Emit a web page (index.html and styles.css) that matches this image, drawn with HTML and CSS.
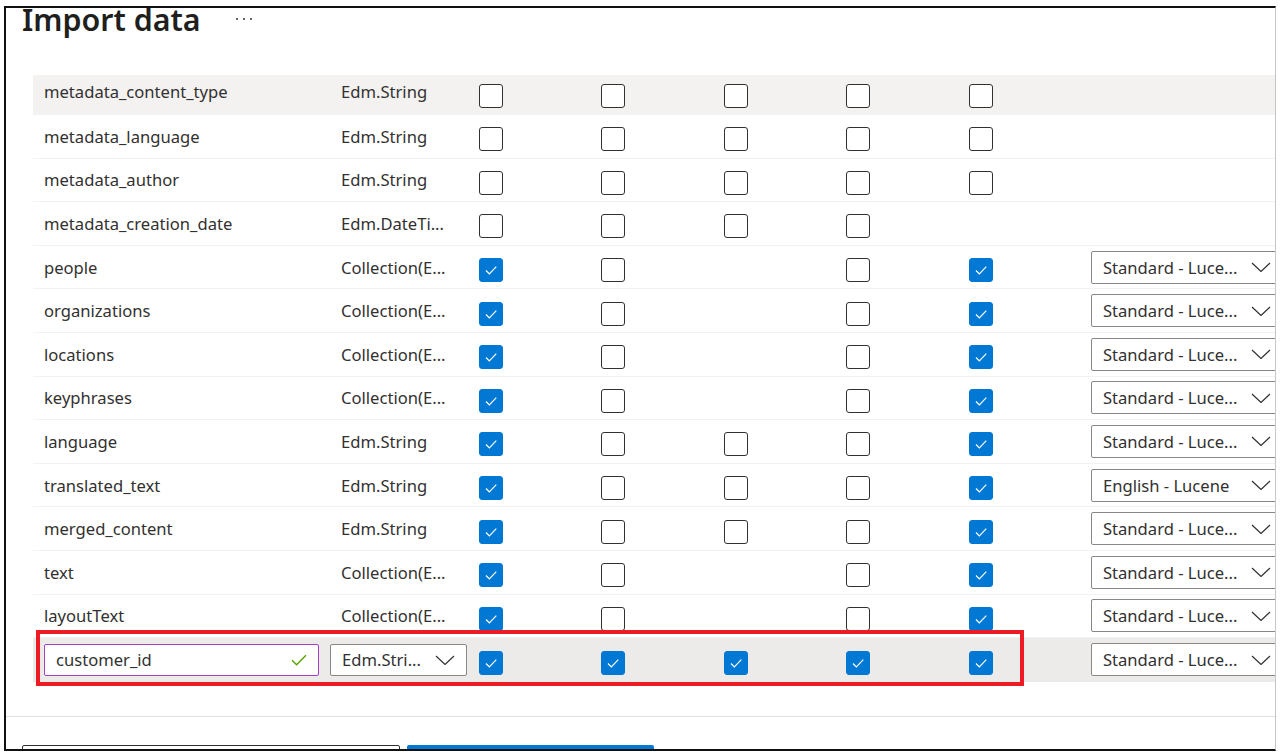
FILE: index.html
```html
<!DOCTYPE html>
<html>
<head>
<meta charset="utf-8">
<link rel="stylesheet" href="styles.css">
</head>
<body>
<svg class="defs" width="0" height="0">
  <symbol id="tick" viewBox="0 0 24 24"><path d="M6.5 12.5 L10.2 16.2 L17.8 8.3" fill="none" stroke="#fff" stroke-width="1.3"/></symbol>
  <symbol id="chev" viewBox="0 0 20 10"><path d="M1 1 L10 9.5 L19 1" fill="none" stroke="#323130" stroke-width="1.2"/></symbol>
</svg>
<div class="frame">
  <div class="header">
    <h1 class="title">Import data</h1>
    <svg class="more" width="20" height="6" viewBox="0 0 20 6"><circle cx="2" cy="3" r="1" fill="#323130"/><circle cx="9" cy="3" r="1" fill="#323130"/><circle cx="16" cy="3" r="1" fill="#323130"/></svg>
  </div>

  <div class="rows">
    <div class="row first">
      <div class="name">metadata_content_type</div><div class="type">Edm.String</div>
      <div class="cell"><span class="cb"></span></div><div class="cell"><span class="cb"></span></div><div class="cell"><span class="cb"></span></div><div class="cell"><span class="cb"></span></div><div class="cell"><span class="cb"></span></div>
    </div>
    <div class="row">
      <div class="name">metadata_language</div><div class="type">Edm.String</div>
      <div class="cell"><span class="cb"></span></div><div class="cell"><span class="cb"></span></div><div class="cell"><span class="cb"></span></div><div class="cell"><span class="cb"></span></div><div class="cell"><span class="cb"></span></div>
    </div>
    <div class="row">
      <div class="name">metadata_author</div><div class="type">Edm.String</div>
      <div class="cell"><span class="cb"></span></div><div class="cell"><span class="cb"></span></div><div class="cell"><span class="cb"></span></div><div class="cell"><span class="cb"></span></div><div class="cell"><span class="cb"></span></div>
    </div>
    <div class="row">
      <div class="name">metadata_creation_date</div><div class="type">Edm.DateTi...</div>
      <div class="cell"><span class="cb"></span></div><div class="cell"><span class="cb"></span></div><div class="cell"><span class="cb"></span></div><div class="cell"><span class="cb"></span></div><div class="cell"></div>
    </div>
    <div class="row">
      <div class="name">people</div><div class="type">Collection(E...</div>
      <div class="cell"><span class="cb on"><svg><use href="#tick"/></svg></span></div><div class="cell"><span class="cb"></span></div><div class="cell"></div><div class="cell"><span class="cb"></span></div><div class="cell"><span class="cb on"><svg><use href="#tick"/></svg></span></div>
      <div class="dd-cell"><div class="dd wide"><span>Standard - Luce...</span><svg class="chev"><use href="#chev"/></svg></div></div>
    </div>
    <div class="row">
      <div class="name">organizations</div><div class="type">Collection(E...</div>
      <div class="cell"><span class="cb on"><svg><use href="#tick"/></svg></span></div><div class="cell"><span class="cb"></span></div><div class="cell"></div><div class="cell"><span class="cb"></span></div><div class="cell"><span class="cb on"><svg><use href="#tick"/></svg></span></div>
      <div class="dd-cell"><div class="dd wide"><span>Standard - Luce...</span><svg class="chev"><use href="#chev"/></svg></div></div>
    </div>
    <div class="row">
      <div class="name">locations</div><div class="type">Collection(E...</div>
      <div class="cell"><span class="cb on"><svg><use href="#tick"/></svg></span></div><div class="cell"><span class="cb"></span></div><div class="cell"></div><div class="cell"><span class="cb"></span></div><div class="cell"><span class="cb on"><svg><use href="#tick"/></svg></span></div>
      <div class="dd-cell"><div class="dd wide"><span>Standard - Luce...</span><svg class="chev"><use href="#chev"/></svg></div></div>
    </div>
    <div class="row">
      <div class="name">keyphrases</div><div class="type">Collection(E...</div>
      <div class="cell"><span class="cb on"><svg><use href="#tick"/></svg></span></div><div class="cell"><span class="cb"></span></div><div class="cell"></div><div class="cell"><span class="cb"></span></div><div class="cell"><span class="cb on"><svg><use href="#tick"/></svg></span></div>
      <div class="dd-cell"><div class="dd wide"><span>Standard - Luce...</span><svg class="chev"><use href="#chev"/></svg></div></div>
    </div>
    <div class="row">
      <div class="name">language</div><div class="type">Edm.String</div>
      <div class="cell"><span class="cb on"><svg><use href="#tick"/></svg></span></div><div class="cell"><span class="cb"></span></div><div class="cell"><span class="cb"></span></div><div class="cell"><span class="cb"></span></div><div class="cell"><span class="cb on"><svg><use href="#tick"/></svg></span></div>
      <div class="dd-cell"><div class="dd wide"><span>Standard - Luce...</span><svg class="chev"><use href="#chev"/></svg></div></div>
    </div>
    <div class="row">
      <div class="name">translated_text</div><div class="type">Edm.String</div>
      <div class="cell"><span class="cb on"><svg><use href="#tick"/></svg></span></div><div class="cell"><span class="cb"></span></div><div class="cell"><span class="cb"></span></div><div class="cell"><span class="cb"></span></div><div class="cell"><span class="cb on"><svg><use href="#tick"/></svg></span></div>
      <div class="dd-cell"><div class="dd wide"><span>English - Lucene</span><svg class="chev"><use href="#chev"/></svg></div></div>
    </div>
    <div class="row">
      <div class="name">merged_content</div><div class="type">Edm.String</div>
      <div class="cell"><span class="cb on"><svg><use href="#tick"/></svg></span></div><div class="cell"><span class="cb"></span></div><div class="cell"><span class="cb"></span></div><div class="cell"><span class="cb"></span></div><div class="cell"><span class="cb on"><svg><use href="#tick"/></svg></span></div>
      <div class="dd-cell"><div class="dd wide"><span>Standard - Luce...</span><svg class="chev"><use href="#chev"/></svg></div></div>
    </div>
    <div class="row">
      <div class="name">text</div><div class="type">Collection(E...</div>
      <div class="cell"><span class="cb on"><svg><use href="#tick"/></svg></span></div><div class="cell"><span class="cb"></span></div><div class="cell"></div><div class="cell"><span class="cb"></span></div><div class="cell"><span class="cb on"><svg><use href="#tick"/></svg></span></div>
      <div class="dd-cell"><div class="dd wide"><span>Standard - Luce...</span><svg class="chev"><use href="#chev"/></svg></div></div>
    </div>
    <div class="row">
      <div class="name">layoutText</div><div class="type">Collection(E...</div>
      <div class="cell"><span class="cb on"><svg><use href="#tick"/></svg></span></div><div class="cell"><span class="cb"></span></div><div class="cell"></div><div class="cell"><span class="cb"></span></div><div class="cell"><span class="cb on"><svg><use href="#tick"/></svg></span></div>
      <div class="dd-cell"><div class="dd wide"><span>Standard - Luce...</span><svg class="chev"><use href="#chev"/></svg></div></div>
    </div>
    <div class="row new">
      <div class="name"><div class="input"><span>customer_id</span><svg class="ok" width="16" height="12" viewBox="0 0 16 12"><path d="M1 6.2 L5.6 10.8 L15 1.2" fill="none" stroke="#57a300" stroke-width="1.4"/></svg></div></div>
      <div class="type"><div class="dd type-dd"><span>Edm.Stri...</span><svg class="chev"><use href="#chev"/></svg></div></div>
      <div class="cell"><span class="cb on"><svg><use href="#tick"/></svg></span></div><div class="cell"><span class="cb on"><svg><use href="#tick"/></svg></span></div><div class="cell"><span class="cb on"><svg><use href="#tick"/></svg></span></div><div class="cell"><span class="cb on"><svg><use href="#tick"/></svg></span></div><div class="cell"><span class="cb on"><svg><use href="#tick"/></svg></span></div>
      <div class="dd-cell"><div class="dd wide"><span>Standard - Luce...</span><svg class="chev"><use href="#chev"/></svg></div></div>
    </div>
  </div>

  <div class="footer">
    <div class="btn secondary"></div>
    <div class="btn primary"></div>
  </div>

  <div class="highlight"></div>
</div>
</body>
</html>
```

FILE: styles.css
```css
* { box-sizing: border-box; }
html, body { margin: 0; padding: 0; background: #fff; }
body {
  font-family: "Noto Sans", "Open Sans", sans-serif;
  color: #323130;
  overflow: hidden;
}
.defs { position: absolute; width: 0; height: 0; }

.frame {
  position: relative;
  margin: 6px 0 0 4px;
  width: 1272px;
  height: 745px;
  border-top: 2px solid #111;
  border-left: 2px solid #111;
  border-right: 1px solid #c8c6c4;
  border-bottom: 2px solid #111;
  overflow: hidden;
  display: flex;
  flex-direction: column;
}

.header {
  flex: 0 0 63.4px;
  height: 63.4px;
  display: flex;
  align-items: flex-start;
  padding-left: 16px;
}
.title {
  margin: 0;
  font-size: 30.4px;
  line-height: 24px;
  font-weight: 600;
  color: #201f1e;
}
.more { margin: 8px 0 0 34px; }

.rows { flex: 0 0 auto; margin-left: 27px; width: 1300px; }
.row {
  height: 43.6px;
  display: grid;
  grid-template-columns: 297px 138px repeat(5, 122.4px) 200px;
  align-items: center;
  padding-left: 11px;
  border-bottom: 1px solid #f3f2f1;
  font-size: 16.6px;
}
.row.first {
  background: linear-gradient(to bottom, transparent 3.6px, #f3f2f1 3.6px);
  border-bottom: none;
}
.row.first .name, .row.first .type { margin-top: -3px; }
.row.new { background: #edebe9; border-bottom: none; }
.name, .type { white-space: nowrap; }
.cell { display: flex; align-items: center; }
.cb {
  display: block;
  width: 24px;
  height: 24px;
  margin-top: 6px;
  border: 1px solid #323130;
  border-radius: 3px;
  background: #fff;
}
.cb.on { background: #0078d4; border-color: #0078d4; }
.cb svg { display: block; width: 22px; height: 22px; }

.dd {
  height: 33px;
  border: 1px solid #8a8886;
  border-radius: 2px;
  background: #fff;
  display: flex;
  align-items: center;
  justify-content: space-between;
  padding: 0 11px;
  font-size: 16.6px;
  white-space: nowrap;
}
.dd.wide { width: 192px; }
.chev { width: 20px; height: 10px; }
.type-dd { width: 137px; height: 32px; margin-left: -11px; }

.input {
  width: 275px;
  height: 32px;
  border: 1px solid #a33fc7;
  border-radius: 2px;
  background: #fff;
  display: flex;
  align-items: center;
  justify-content: space-between;
  padding: 0 11px;
}
.ok { display: block; }

.footer {
  flex: 0 0 auto;
  margin-top: 34px;
  border-top: 1px solid #e1dfdd;
  padding: 28px 0 0 16px;
  display: flex;
  gap: 7px;
}
.btn { flex: 0 0 auto; height: 32px; border-radius: 2px; }
.btn.secondary { width: 378px; border: 1px solid #323130; background: #fff; }
.btn.primary { width: 247px; background: #0078d4; }

.highlight {
  position: absolute;
  left: 30px;
  top: 622px;
  width: 988px;
  height: 56px;
  border: 4px solid #ed1c24;
}
```
